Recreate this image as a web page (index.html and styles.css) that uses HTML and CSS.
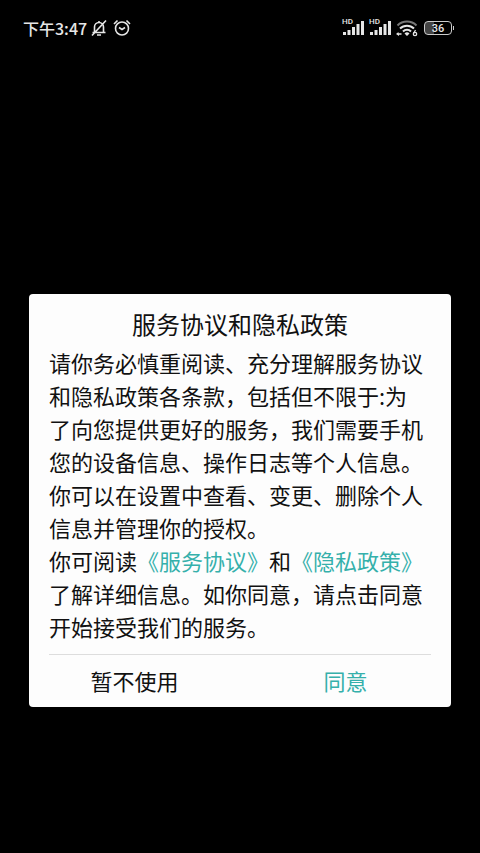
FILE: index.html
```html
<!DOCTYPE html>
<html lang="zh-CN">
<head>
    <meta charset="UTF-8">
    <meta name="viewport" content="width=device-width, initial-scale=1.0">
    <title>服务协议和隐私政策</title>
    <link rel="stylesheet" href="styles.css">
</head>
<body>
    <header class="status-bar">
        <div class="status-left">
            <span class="time">下午3:47</span>
            <svg class="icon" width="18" height="18" viewBox="0 0 18 18">
                <path d="M2.500 13.500h13M4.500 13.500V8a4.500 4.500 0 0 1 9 0v5.500M9 3.500V2M7 16h4M2 16.500L16 1.500"/>
            </svg>
            <svg class="icon alarm" width="18" height="18" viewBox="0 0 18 18">
                <circle cx="9" cy="9.500" r="6.500"/>
                <path d="M6 8.500L9 10.500l3-2M1 5L4.500 1.500M17 5L13.500 1.500"/>
            </svg>
        </div>
        <div class="status-right">
            <div class="signal">
                <span class="hd">HD</span>
                <svg width="23" height="14" viewBox="0 0 23 14">
                    <path d="M1 11h3v3H1zM5.500 9h3v5h-3zM10 6h3v8h-3zM14.500 3h3v11h-3zM19 0h3v14h-3z"/>
                </svg>
            </div>
            <div class="signal">
                <span class="hd">HD</span>
                <svg width="23" height="14" viewBox="0 0 23 14">
                    <path d="M1 11h3v3H1zM5.500 9h3v5h-3zM10 6h3v8h-3zM14.500 3h3v11h-3zM19 0h3v14h-3z"/>
                </svg>
            </div>
            <svg class="wifi" width="22" height="17" viewBox="0 0 22 17">
                <path class="wifi-dim" d="M1.500 5.500a13.500 13.500 0 0 1 19 0"/>
                <path d="M4 8.500a10 10 0 0 1 14 0M7 11.500a5.600 5.600 0 0 1 8 0"/>
                <path class="wifi-fill" d="M8.500 13.500a3.500 3.500 0 0 1 5 0L11 16zM0 14l2.500-2v1.300h3v1.400H3V16z"/>
                <path class="wifi-mark" d="M19.500 10l-2 3.500"/>
                <circle class="wifi-mark" cx="19" cy="14" r="1.700"/>
            </svg>
            <div class="battery"><span>36</span></div>
        </div>
    </header>

    <main class="screen">
        <section class="dialog" role="dialog" aria-labelledby="dialogTitle">
            <h1 id="dialogTitle">服务协议和隐私政策</h1>
            <div class="content">
                <p>请你务必慎重阅读、充分理解服务协议和隐私政策各条款，包括但不限于:为了向您提供更好的服务，我们需要手机您的设备信息、操作日志等个人信息。你可以在设置中查看、变更、删除个人信息并管理你的授权。</p>
                <p>你可阅读<a href="#service">《服务协议》</a>和<a href="#privacy">《隐私政策》</a>了解详细信息。如你同意，请点击同意开始接受我们的服务。</p>
            </div>
            <div class="actions">
                <button type="button">暂不使用</button>
                <button type="button" class="agree">同意</button>
            </div>
        </section>
    </main>
</body>
</html>
```
FILE: styles.css
```css
* {
    margin: 0;
    padding: 0;
    box-sizing: border-box;
}

body {
    font-family: 'Noto Sans CJK SC', sans-serif;
    background: #000;
    color: #111;
    min-height: 100vh;
}

/* status bar */
.status-bar {
    display: flex;
    justify-content: space-between;
    align-items: center;
    height: 56px;
    padding: 0 25px 0 23px;
    color: #e6e6e6;
}

.status-left,
.status-right {
    display: flex;
    align-items: center;
}

.time {
    font-size: 16px;
    font-weight: 500;
    line-height: 24px;
    margin-right: 3px;
}

.icon {
    fill: none;
    stroke: #e6e6e6;
    stroke-width: 1.6;
}

.alarm {
    margin-left: 5px;
}

.status-right {
    gap: 4px;
}

.signal {
    position: relative;
    height: 16px;
    padding-top: 1px;
}

.signal svg {
    display: block;
    fill: #e6e6e6;
}

.hd {
    position: absolute;
    top: -2px;
    left: 0;
    padding-right: 1px;
    background: #000;
    font-family: 'Roboto', sans-serif;
    font-size: 8px;
    font-weight: 500;
    line-height: 8px;
}

.wifi {
    fill: none;
    stroke: #e6e6e6;
    stroke-width: 2;
}

.wifi-dim {
    stroke: #777;
}

.wifi-fill {
    fill: #e6e6e6;
    stroke: none;
}

.wifi-mark {
    stroke-width: 1.3;
}

.battery {
    position: relative;
    width: 28px;
    height: 14px;
    margin: 0 3px 0 2px;
    border: 1px solid #ccc;
    border-radius: 4px;
    background: linear-gradient(90deg, #444 36%, #000 36%);
    font-family: 'Roboto', sans-serif;
    font-size: 11px;
    font-weight: 500;
    line-height: 13px;
    text-align: center;
}

.battery::after {
    content: "";
    position: absolute;
    top: 4px;
    right: -3px;
    width: 1px;
    height: 4px;
    background: #ccc;
}

/* dialog */
.screen {
    padding: 238px 29px 40px;
}

.dialog {
    background: #fdfdfd;
    border-radius: 4px;
    padding: 12px 0 3px;
}

.dialog h1 {
    font-size: 24px;
    font-weight: 400;
    line-height: 36px;
    text-align: center;
}

.content {
    margin: 0 20px;
    padding: 4px 0 11px;
    border-bottom: 1px solid #ddd;
    font-size: 22px;
    line-height: 33px;
}

.content p {
    padding-right: 4px;
}

.content a {
    color: #35b0ab;
    text-decoration: none;
}

.actions {
    display: flex;
}

.actions button {
    flex: 1;
    height: 49px;
    border: none;
    background: none;
    color: #111;
    font-family: inherit;
    font-size: 22px;
    cursor: pointer;
}

.actions .agree {
    color: #35b0ab;
}
```
